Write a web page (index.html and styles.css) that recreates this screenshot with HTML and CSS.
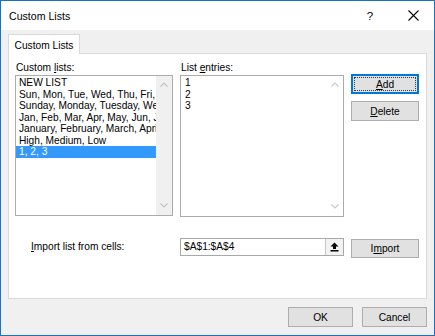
FILE: index.html
```html
<!DOCTYPE html>
<html>
<head>
<meta charset="utf-8">
<link rel="stylesheet" href="styles.css">
</head>
<body>
<div class="window">
  <div class="titlebar">
    <span class="title">Custom Lists</span>
    <span class="help">?</span>
    <span class="close">
      <svg width="11" height="11" viewBox="0 0 11 11"><path d="M0.5 0.5 L10.5 10.5 M10.5 0.5 L0.5 10.5" stroke="#000" stroke-width="1.1" fill="none"/></svg>
    </span>
  </div>
  <div class="body">
    <div class="tabs"><div class="tab">Custom Lists</div></div>
    <div class="panel">
      <div class="grid">
        <div class="lbl">Custom <u>l</u>ists:</div>
        <div class="lbl">List <u>e</u>ntries:</div>
        <div></div>
        <div class="listbox">
          <ul class="items">
            <li>NEW LIST</li>
            <li>Sun, Mon, Tue, Wed, Thu, Fri, Sat</li>
            <li>Sunday, Monday, Tuesday, Wed</li>
            <li>Jan, Feb, Mar, Apr, May, Jun, Jul, Aug</li>
            <li>January, February, March, April</li>
            <li>High, Medium, Low</li>
            <li class="sel">1, 2, 3</li>
          </ul>
          <div class="vscroll gray">
            <svg class="arr" width="8" height="5" viewBox="0 0 8 5"><path d="M0.5 4.5 L4 1 L7.5 4.5" stroke="#c2c2c2" stroke-width="1.1" fill="none"/></svg>
            <svg class="arr" width="8" height="5" viewBox="0 0 8 5"><path d="M0.5 0.5 L4 4 L7.5 0.5" stroke="#c2c2c2" stroke-width="1.1" fill="none"/></svg>
          </div>
        </div>
        <div class="listbox entries">
          <ul class="items">
            <li>1</li>
            <li>2</li>
            <li>3</li>
          </ul>
          <div class="vscroll">
            <svg class="arr" width="8" height="5" viewBox="0 0 8 5"><path d="M0.5 4.5 L4 1 L7.5 4.5" stroke="#c8c8c8" stroke-width="1.1" fill="none"/></svg>
            <svg class="arr" width="8" height="5" viewBox="0 0 8 5"><path d="M0.5 0.5 L4 4 L7.5 0.5" stroke="#c8c8c8" stroke-width="1.1" fill="none"/></svg>
          </div>
        </div>
        <div class="btncol">
          <button class="btn default"><u>A</u>dd</button>
          <button class="btn"><u>D</u>elete</button>
        </div>
        <div class="import-lbl"><u>I</u>mport list from cells:</div>
        <div class="refedit">
          <span class="ref">$A$1:$A$4</span>
          <span class="collapse">
            <svg width="9" height="10" viewBox="0 0 9 10"><path d="M4.5 0.5 L8.5 4.5 L6 4.5 L6 7 L3 7 L3 4.5 L0.5 4.5 Z" fill="#000"/><rect x="0.5" y="8" width="8" height="1.5" fill="#000"/></svg>
          </span>
        </div>
        <button class="btn import">I<u>m</u>port</button>
      </div>
    </div>
    <div class="footer">
      <button class="btn foot">OK</button>
      <button class="btn foot">Cancel</button>
    </div>
  </div>
</div>
</body>
</html>
```
FILE: styles.css
```css
html, body {
  margin: 0;
  padding: 0;
  background: #ffffff;
}
body {
  font-family: "Liberation Sans", Arial, sans-serif;
  font-size: 10.2px;
  color: #000;
}
.window {
  width: 435px;
  height: 336px;
  box-sizing: border-box;
  border: 1px solid #1a72c4;
  background: #f0f0f0;
  display: flex;
  flex-direction: column;
}
.titlebar {
  height: 29px;
  background: #ffffff;
  display: flex;
  align-items: center;
  flex: none;
}
.title {
  font-size: 10.6px;
  padding-left: 8px;
  flex: 1;
}
.help {
  font-size: 11.5px;
  width: 14px;
  text-align: center;
  margin-right: 31px;
}
.close {
  width: 11px;
  height: 11px;
  margin-right: 15px;
  display: flex;
}
.body {
  flex: 1;
  display: flex;
  flex-direction: column;
  padding: 4px 7px 0 7px;
}
.tabs {
  display: flex;
  height: 19px;
  position: relative;
  z-index: 1;
}
.tab {
  width: 72px;
  box-sizing: border-box;
  height: 20px;
  background: #fff;
  border: 1px solid #d9d9d9;
  border-bottom: none;
  display: flex;
  align-items: center;
  justify-content: center;
  padding-top: 1px;
}
.panel {
  height: 246px;
  box-sizing: border-box;
  background: #fff;
  border: 1px solid #d9d9d9;
  padding: 8px 6px 0 6px;
}
.grid {
  display: grid;
  grid-template-columns: 158px 164px 68px;
  grid-template-rows: 13px 141px 42px;
  column-gap: 7px;
  row-gap: 0;
}
.grid > .import-lbl,
.grid > .refedit {
  margin-top: 22px;
}
.lbl {
  line-height: 12px;
  padding-left: 1px;
}
.listbox {
  border: 1px solid #ababab;
  background: #fff;
  display: flex;
  overflow: hidden;
  box-sizing: border-box;
}
.entries {
  height: 142px;
}
.items {
  list-style: none;
  margin: 0;
  padding: 1px 0 0 0;
  flex: 1;
  min-width: 0;
}
.items li {
  line-height: 11.5px;
  height: 11.5px;
  padding-left: 3px;
  white-space: nowrap;
  overflow: hidden;
}
.entries .items li {
  padding-left: 4px;
}
.items li.sel {
  background: #3399ff;
  color: #fff;
}
.vscroll {
  width: 16px;
  flex: none;
  display: flex;
  flex-direction: column;
  justify-content: space-between;
  align-items: center;
  padding: 6px 0 7px 0;
}
.vscroll.gray {
  background: #f0f0f0;
}
.btncol {
  display: flex;
  flex-direction: column;
  gap: 7px;
  margin-top: -1px;
}
.btn {
  font-family: inherit;
  font-size: 10.2px;
  color: #000;
  background: #e1e1e1;
  border: 1px solid #adadad;
  height: 20px;
  padding: 0;
  margin: 0;
  box-sizing: border-box;
}
.btn.default {
  border-color: #0078d7;
  box-shadow: inset 0 0 0 1px #0078d7;
  outline: 1px dotted #3a3a3a;
  outline-offset: -4px;
}
.import-lbl {
  padding-left: 16px;
  line-height: 18px;
  height: 18px;
}
.refedit {
  height: 18px;
  box-sizing: border-box;
  border: 1px solid #a8a8a8;
  background: #fff;
  display: flex;
  align-items: stretch;
}
.ref {
  flex: 1;
  padding-left: 3px;
  line-height: 16px;
}
.collapse {
  width: 17px;
  background: #f2f2f2;
  border-left: 1px solid #c6c6c6;
  display: flex;
  align-items: center;
  justify-content: center;
}
.btn.import {
  height: 19px;
  margin-top: 23px;
}
.footer {
  display: flex;
  justify-content: flex-end;
  gap: 9px;
  padding-top: 8px;
}
.btn.foot {
  width: 65px;
  height: 20px;
}
```
